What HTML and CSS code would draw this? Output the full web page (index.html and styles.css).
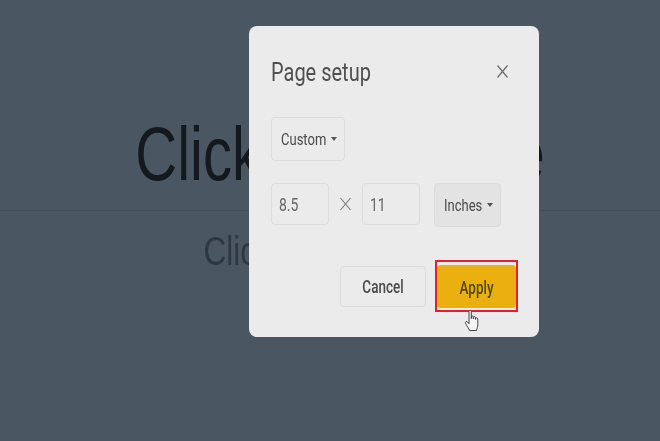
FILE: index.html
```html
<!DOCTYPE html>
<html lang="en">
<head>
<meta charset="utf-8">
<title>Page setup</title>
<link rel="stylesheet" href="styles.css">
</head>
<body>
<main class="slide">
  <h1 class="slide-title"><span class="tall">Click to add title</span></h1>
  <p class="slide-sub"><span class="tall">Click to add subtitle</span></p>
</main>
<section class="dialog">
  <header class="dialog-head">
    <h2 class="dialog-title"><span class="tall">Page setup</span></h2>
    <svg class="close" width="13" height="15" viewBox="0 0 13 15"><path d="M1.5 1.5 11.5 13.5M11.5 1.5 1.5 13.5" fill="none" stroke="#6a6a6a" stroke-width="1.2"/></svg>
  </header>
  <div class="select select-custom"><span class="tall">Custom</span><i class="caret"></i></div>
  <div class="size-row">
    <div class="field"><span class="tall">8.5</span></div>
    <svg class="times" width="13" height="14" viewBox="0 0 13 14"><path d="M1.5 1 11.5 13M11.5 1 1.5 13" fill="none" stroke="#777" stroke-width="1.1"/></svg>
    <div class="field"><span class="tall">11</span></div>
    <div class="select select-unit"><span class="tall">Inches</span><i class="caret"></i></div>
  </div>
  <footer class="actions">
    <div class="btn btn-cancel"><span class="tall">Cancel</span></div>
    <div class="highlight"><div class="btn btn-apply"><span class="tall">Apply</span></div></div>
  </footer>
  <svg class="hand" width="16" height="23" viewBox="0 0 16 23"><path d="M5 10V2.5C5 .8 7.3 .8 7.3 2.5V9.5V8C7.3 6.6 9.4 6.6 9.4 8V10V8.6C9.4 7.3 11.5 7.3 11.5 8.8V10.5V9.6C11.5 8.4 13.8 8.6 13.8 10V15.5C13.8 18 13 19 12.5 21.5H5.5C5 19.5 3 17.5 1.6 14.5C.8 12.8 2.6 11.8 3.6 13L5 14.7Z" fill="#f4f4f4" stroke="#444" stroke-width="1"/></svg>
</section>
</body>
</html>
```
FILE: styles.css
```css
html, body { margin: 0; height: 100%; }
body {
  width: 660px;
  height: 441px;
  overflow: hidden;
  background: #4a5763;
  font-family: Roboto, "Liberation Sans", sans-serif;
  position: relative;
}
.tall {
  display: inline-block;
  transform: scaleY(1.3);
  white-space: nowrap;
  filter: blur(0.35px);
}

.slide { padding: 116px 0 0 20px; text-align: center; }
.slide-title {
  margin: 0 0 0 -20px;
  padding-left: 20px;
  height: 94px;
  font: 400 58px/76px "Liberation Sans", sans-serif;
  color: #14191e;
  border-bottom: 1px solid #414c57;
}
.slide-sub {
  margin: 0;
  padding-top: 20px;
  font: 400 31.5px/40px "Liberation Sans", sans-serif;
  color: #2f3740;
}

.dialog {
  position: absolute;
  left: 249px;
  top: 26px;
  width: 290px;
  height: 311px;
  box-sizing: border-box;
  padding: 0 22px;
  background: #ebebeb;
  border-radius: 8px;
  color: #444;
}
.dialog-head {
  display: flex;
  align-items: center;
  justify-content: space-between;
  height: 91px;
  padding-right: 8px;
}
.dialog-title {
  margin: 0;
  font: 400 20px/30px Roboto, sans-serif;
  color: #505050;
}
.select, .field, .btn { box-sizing: border-box; border-radius: 4px; }
.select {
  display: flex;
  align-items: center;
  gap: 5px;
  border: 1px solid #dcdcdc;
  font-size: 13px;
  color: #4a4a4a;
}
.select-custom { width: 74px; height: 44px; padding-left: 9px; }
.select-unit {
  width: 67px;
  height: 44px;
  padding-left: 9px;
  margin-left: 14px;
  background: #e3e3e3;
}
.caret {
  flex: none;
  width: 0;
  height: 0;
  border-left: 3.5px solid transparent;
  border-right: 3.5px solid transparent;
  border-top: 4px solid #555;
}
.size-row { display: flex; align-items: flex-start; margin-top: 22px; }
.field {
  width: 58px;
  height: 42px;
  padding-left: 7px;
  border: 1px solid #dcdcdc;
  font-size: 14px;
  line-height: 40px;
  color: #666;
}
.times { margin: 14px 10px 0 10px; }
.actions {
  display: flex;
  justify-content: flex-end;
  align-items: center;
  gap: 9px;
  margin-top: 33px;
  margin-right: -1px;
}
.btn {
  display: flex;
  align-items: center;
  justify-content: center;
  font-size: 13.5px;
  font-weight: 500;
}
.btn-cancel { width: 86px; height: 41px; border: 1px solid #dcdcdc; color: #4a4a4a; }
.highlight {
  box-sizing: border-box;
  width: 83px;
  height: 52px;
  padding: 2px 0 1px 0;
  border: 2px solid #e5202e;
  background: #ebebeb;
}
.btn-apply {
  height: 43px;
  margin-top: 1px;
  background: #eab010;
  color: #50440f;
}
.hand { position: absolute; left: 215px; top: 283px; }
```
